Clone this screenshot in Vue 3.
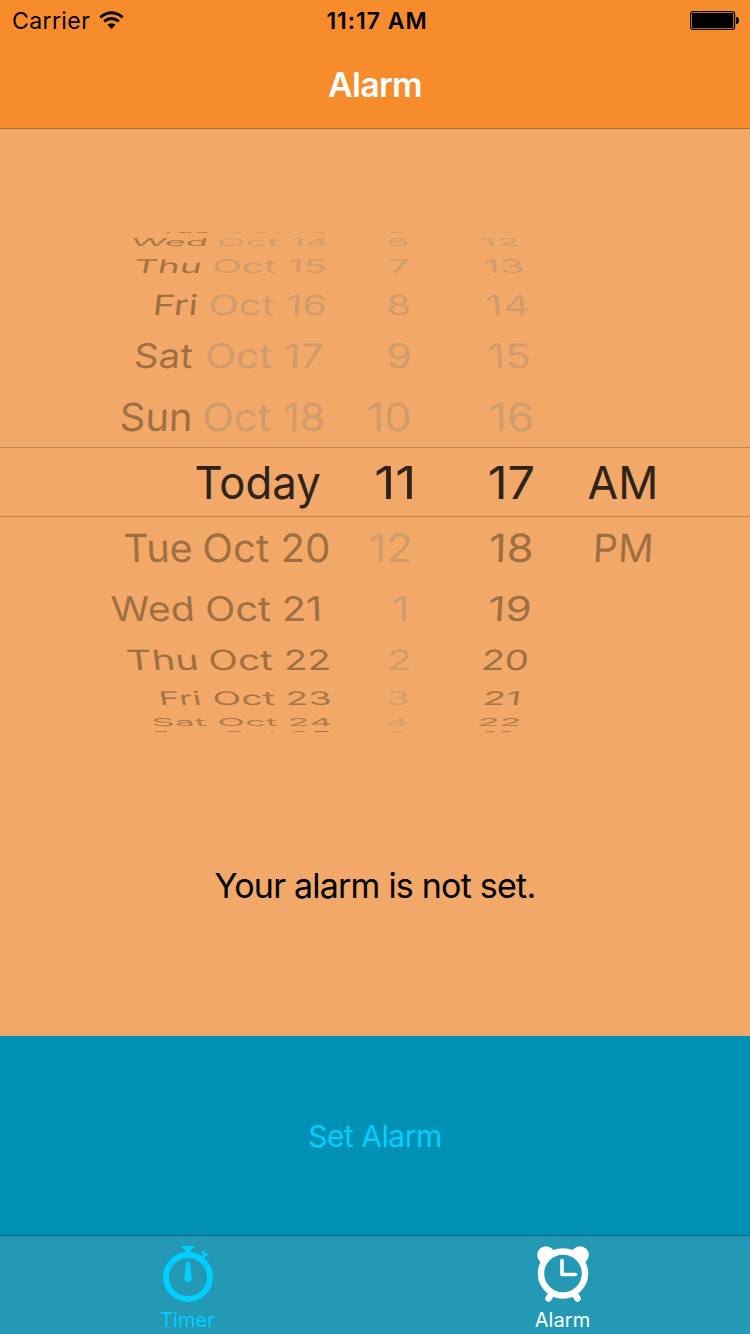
<script setup>
const rows = [
  { top: 226.5, base: 233.3, lean: 0.3, tone: 0.8, day: ['Tue', 160, 211], date: ['Oct 13', 222, 328], hour: ['5', 387, 407], minute: ['11', 484, 512], past: true },
  { top: 238, base: 245.9, lean: 0.28, tone: 0.85, day: ['Wed', 131, 207], date: ['Oct 14', 218, 328], hour: ['6', 387.5, 408], minute: ['12', 481, 519], past: true },
  { top: 259.2, base: 273, lean: 0.19, tone: 0.95, day: ['Thu', 134.5, 201], date: ['Oct 15', 213.5, 326], hour: ['7', 389, 408.7], minute: ['13', 484, 523], past: true },
  { top: 294.4, base: 314.7, lean: 0.11, tone: 1, day: ['Fri', 154.5, 197.5], date: ['Oct 16', 209.5, 325.5], hour: ['8', 388, 409.5], minute: ['14', 486.5, 528.5], past: true },
  { top: 343.4, base: 368, lean: 0.065, tone: 1, day: ['Sat', 135, 193.5], date: ['Oct 17', 206.5, 322], hour: ['9', 388, 410], minute: ['15', 489, 530], past: true },
  { top: 402.3, base: 430.5, lean: 0.03, tone: 1, day: ['Sun', 121, 190.5], date: ['Oct 18', 204, 323.5], hour: ['10', 368.5, 410], minute: ['16', 490.5, 532.5], past: true },
  { top: 466, base: 499, lean: 0, current: true, date: ['Today', 196.5, 320], hour: ['11', 376.500, 413], minute: ['17', 490, 533], half: ['AM', 588.5, 654.5] },
  { top: 533.7, base: 562, lean: -0.03, tone: 1, day: ['Tue', 125, 191.5], date: ['Oct 20', 204, 329], hour: ['12', 370.5, 410], minute: ['18', 490.5, 532], half: ['PM', 595, 651] },
  { top: 596.2, base: 621, lean: -0.065, tone: 1, day: ['Wed', 111, 193], date: ['Oct 21', 206.5, 320], hour: ['1', 394, 407], minute: ['19', 489.5, 530.5] },
  { top: 649.7, base: 670, lean: -0.11, tone: 1, day: ['Thu', 127, 197], date: ['Oct 22', 209.5, 329], hour: ['2', 389, 409.5], minute: ['20', 483, 528.5] },
  { top: 691.3, base: 705, lean: -0.19, tone: 0.9, day: ['Fri', 160, 201], date: ['Oct 23', 213.5, 330.5], hour: ['3', 387.5, 408], minute: ['21', 484, 520] },
  { top: 718.3, base: 726.1, lean: -0.28, tone: 0.8, day: ['Sat', 152, 207], date: ['Oct 24', 218.5, 331], hour: ['4', 386.5, 407.5], minute: ['22', 479, 520] },
  { top: 730.6, base: 737.5, lean: -0.3, tone: 0.9, day: ['Sun', 152, 207], date: ['Oct 25', 222, 331], hour: ['5', 387, 405], minute: ['23', 482, 513] }
]

const size = 44
const ctx = document.createElement('canvas').getContext('2d')
ctx.font = `${size}px Inter`
const capHeight = ctx.measureText('H').actualBoundingBoxAscent

// Projects a label onto the wheel: stretched, flattened and leaning towards the centre.
function project(row, [text, left, right], faded) {
  const m = ctx.measureText(text)
  const height = row.base - row.top
  const lean = (row.lean * (350 - (left + right) / 2)) / 180
  const spread = Math.abs(lean) * height
  const sx = (right - left - spread) / (m.actualBoundingBoxLeft + m.actualBoundingBoxRight)
  const sy = height / capHeight
  const startX = left + spread / 2 + m.actualBoundingBoxLeft * sx - (lean * height) / 2
  return {
    text,
    transform: `matrix(${sx} 0 ${-lean * sy} ${sy} ${startX} ${row.base - 129})`,
    fill: row.current ? '#30231a' : faded ? '#827c74' : '#4d341b',
    opacity: row.current ? 1 : (faded ? 0.3 : 0.5) * row.tone
  }
}

const labels = rows.flatMap((row) => {
  const out = []
  if (row.day) out.push(project(row, row.day, false))
  out.push(project(row, row.date, row.past))
  out.push(project(row, row.hour, !row.current))
  out.push(project(row, row.minute, row.past))
  if (row.half) out.push(project(row, row.half, false))
  return out
})
</script>

<template>
  <div class="screen">
    <header class="nav">
      <div class="status">
        <div class="carrier">
          <span>Carrier</span>
          <svg width="26" height="19" viewBox="0 0 26 19">
            <g fill="none" stroke="#000" stroke-width="2.9">
              <path d="M1.3 6.3Q12.5-2.6 23.7 6.3" />
              <path d="M5.1 10.3Q12.5 4.6 19.9 10.3" />
            </g>
            <path d="M8.4 13.8Q12.5 10.6 16.6 13.8L12.5 18Z" />
          </svg>
        </div>
        <span class="time">11:17 AM</span>
        <svg class="battery" width="50" height="20" viewBox="0 0 50 20">
          <rect x=".6" y=".6" width="44" height="17.8" rx="2.5" fill="none" stroke="#000" stroke-width="1.2" />
          <rect x="2" y="2" width="41.2" height="15" rx="1.2" />
          <path d="M46 6h.6c1.6 0 2.4 1.5 2.4 3.5S48.2 13 46.6 13H46z" />
        </svg>
      </div>
      <h1>Alarm</h1>
    </header>

    <main>
      <svg class="wheel" width="750" height="700" viewBox="0 0 750 700">
        <defs>
          <clipPath id="drum"><rect x="0" y="103" width="750" height="500" /></clipPath>
        </defs>
        <g clip-path="url(#drum)" :font-size="size">
          <text v-for="(l, i) in labels" :key="i" :transform="l.transform" :fill="l.fill" :fill-opacity="l.opacity">{{ l.text }}</text>
        </g>
        <path d="M0 318.5H750M0 387.5H750" stroke="#c18652" />
      </svg>
      <p>Your alarm is not set.</p>
    </main>

    <button class="set">Set Alarm</button>

    <nav class="tabs">
      <div class="tab timer">
        <svg width="60" height="60" viewBox="158 1242 60 60">
          <circle cx="188" cy="1277" r="22" fill="none" stroke="currentColor" stroke-width="5.8" />
          <path d="M182 1246h12v1.5l-3.5 2.5v4h-5v-4L182 1247.5zM186 1263q2-2.2 4 0l1.7 17.2q-3.7 3.6-7.4 0z" fill="currentColor" />
          <path d="M201.800 1250.500l6 3.500-.6 2.200-2.200-.3-1.500 2.400 1.500 1-1.500 2-4.500-3.500 1.500-2 1.300.7 1.400-2.300-1.800-1.600z" fill="currentColor" />
        </svg>
        <span>Timer</span>
      </div>
      <div class="tab">
        <svg width="60" height="60" viewBox="533 1242 60 60">
          <g fill="currentColor">
            <circle cx="546" cy="1255" r="8.8" />
            <circle cx="580" cy="1255" r="8.8" />
          </g>
          <path d="M552 1293l-3.5 5.500M574 1293l3.5 5.500" stroke="currentColor" stroke-width="6.5" stroke-linecap="round" />
          <circle cx="563" cy="1273.500" r="22" fill="#2399b6" stroke="currentColor" stroke-width="6.4" />
          <path d="M562 1260.500v14h13.500" fill="none" stroke="currentColor" stroke-width="3.6" stroke-linecap="round" stroke-linejoin="round" />
        </svg>
        <span>Alarm</span>
      </div>
    </nav>
  </div>
</template>

<style>
body {
  margin: 0;
}
</style>

<style scoped>
.screen {
  width: 750px;
  height: 1334px;
  display: flex;
  flex-direction: column;
  overflow: hidden;
  background: #f1a868;
  font-family: Inter, "Liberation Sans", sans-serif;
}
.nav {
  box-sizing: border-box;
  height: 129px;
  background: #f68c2c;
  border-bottom: 1px solid #a37344;
}
.status {
  height: 42px;
  display: grid;
  grid-template-columns: 1fr auto 1fr;
  align-items: center;
  padding: 0 10px 0 12px;
  font-size: 23px;
  line-height: 42px;
}
.carrier {
  display: flex;
  align-items: center;
  gap: 9px;
  letter-spacing: 0.4px;
}
.carrier svg {
  margin-bottom: 2px;
}
.time {
  padding-left: 2px;
  font-weight: 600;
  letter-spacing: 0.95px;
}
.battery {
  justify-self: end;
}
h1 {
  margin: 0;
  font-size: 34px;
  font-weight: 600;
  line-height: 86px;
  text-align: center;
  letter-spacing: -0.7px;
  color: #fff;
}
main {
  height: 907px;
}
.wheel {
  display: block;
}
p {
  margin: 0;
  padding-top: 32px;
  font-size: 34px;
  line-height: 50px;
  text-align: center;
  letter-spacing: -0.78px;
  color: #000;
}
.set {
  height: 199px;
  padding: 0;
  border: 0;
  background: #0090b3;
  color: #00cfff;
  font: inherit;
  font-size: 30px;
  letter-spacing: -0.5px;
}
.tabs {
  box-sizing: border-box;
  height: 99px;
  display: grid;
  grid-template-columns: 1fr 1fr;
  background: #2399b6;
  border-top: 1px solid #08657f;
}
.tab {
  display: flex;
  flex-direction: column;
  align-items: center;
  padding-top: 6px;
  color: #fff;
  font-size: 20px;
}
.tab svg {
  flex: none;
}
.tab span {
  height: 32px;
  line-height: 36px;
  letter-spacing: 0.1px;
}
.timer {
  color: #00cfff;
}
</style>
